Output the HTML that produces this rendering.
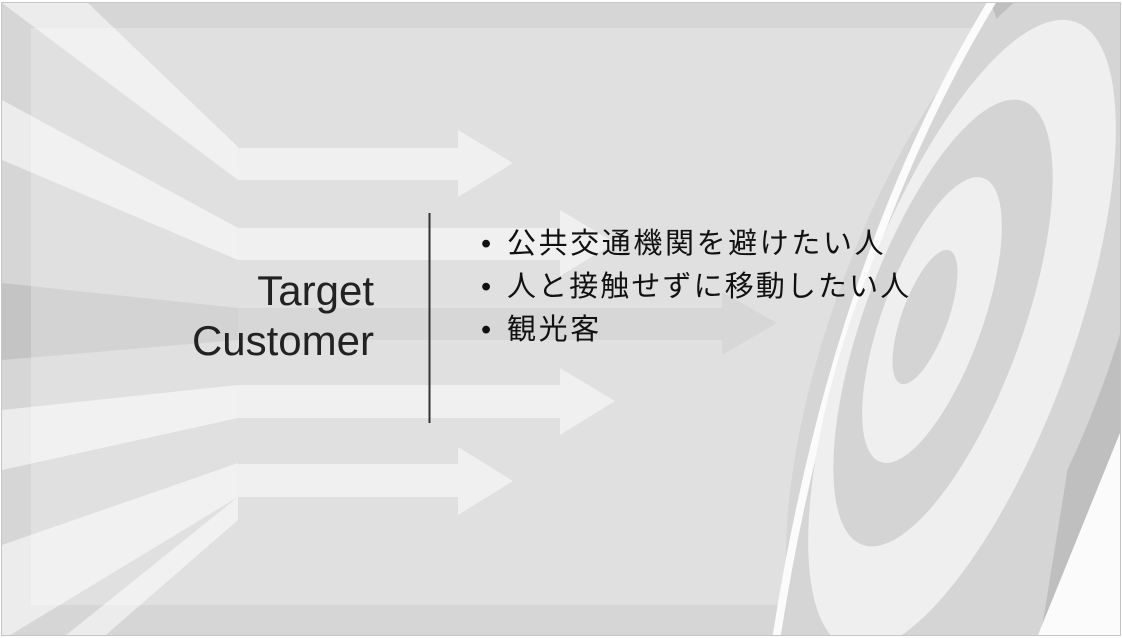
<!DOCTYPE html>
<html><head><meta charset="utf-8"><style>
html,body{margin:0;padding:0;width:1122px;height:638px;overflow:hidden;background:#fff}
svg{position:absolute;left:0;top:0}
.t{position:absolute;font-family:"Liberation Sans","Noto Sans CJK JP",sans-serif;color:#111}
.b{display:inline-block;width:26px}
</style></head><body>
<svg width="1122" height="638" viewBox="0 0 1122 638">
<defs><clipPath id="c"><rect x="2" y="3" width="1118" height="632"/></clipPath></defs>
<rect x="0" y="0" width="1122" height="638" fill="#fff"/>
<rect x="1.5" y="2.5" width="1119" height="633" fill="#d6d6d6" stroke="#c6c6c6"/>
<g clip-path="url(#c)">
<polygon points="2,3 88,3 238,147 238,180" fill="#ececec"/>
<polygon points="2,100 238,228 238,260 2,160" fill="#ececec"/>
<polygon points="2,283 238,308 238,340 2,360" fill="#c4c4c4"/>
<polygon points="2,410 238,385 238,418 2,470" fill="#ececec"/>
<polygon points="2,545 238,463 238,497 2,640" fill="#ececec"/>
<polygon points="60,640 238,497 238,520 100,640" fill="#ececec"/>
<rect x="31" y="28" width="1061" height="577" fill="#fff" fill-opacity="0.25"/>
<polygon points="238,148 458,148 458,130 513,163 458,197 458,180 238,180" fill="#f0f0f0"/>
<polygon points="238,228 560,228 560,210 615,243 560,276 560,260 238,260" fill="#f0f0f0"/>
<polygon points="238,308 722,308 722,292 777,323 722,355 722,340 238,340" fill="#d7d7d7"/>
<polygon points="238,385 560,385 560,368 615,401 560,435 560,418 238,418" fill="#f0f0f0"/>
<polygon points="238,464 458,464 458,447 513,481 458,515 458,497 238,497" fill="#f0f0f0"/>
<!-- target -->
<path d="M996,0 Q840,260 780,640 L1122,640 L1122,0 Z" fill="#d5d5d5"/>
<polygon points="990,0 1122,0 1122,640 1040,640 1095,300" fill="#bfbfbf"/>
<ellipse cx="972" cy="335" rx="140" ry="385" transform="rotate(20 972 335)" fill="#d5d5d5"/>
<polygon points="1122,428 1122,640 1036,640" fill="#fbfbfb"/>
<path d="M993,0 Q835,260 776,640" fill="none" stroke="#fbfbfb" stroke-width="8"/>
<ellipse cx="962" cy="335" rx="110" ry="333" transform="rotate(20 962 335)" fill="#efefef"/>
<ellipse cx="943" cy="323" rx="79" ry="236" transform="rotate(20 943 323)" fill="#d4d4d4"/>
<ellipse cx="932" cy="320" rx="50" ry="151" transform="rotate(20 932 320)" fill="#efefef"/>
<ellipse cx="925" cy="317" rx="23" ry="71" transform="rotate(20 925 317)" fill="#d4d4d4"/>
</g>
<line x1="429.5" y1="213" x2="429.5" y2="423" stroke="#333" stroke-width="2"/>
</svg>
<div class="t" style="left:150px;top:266px;width:224px;text-align:right;font-size:42px;line-height:50px;color:#222">Target<br>Customer</div>
<div class="t" style="left:481px;top:223px;font-size:29px;line-height:43px;white-space:nowrap">
<div><span class="b">•</span><span style="letter-spacing:2.6px">公共交通機関を避けたい人</span></div>
<div><span class="b">•</span><span style="letter-spacing:2.1px">人と接触せずに移動したい人</span></div>
<div><span class="b">•</span><span style="letter-spacing:2.6px">観光客</span></div>
</div>
</body></html>
